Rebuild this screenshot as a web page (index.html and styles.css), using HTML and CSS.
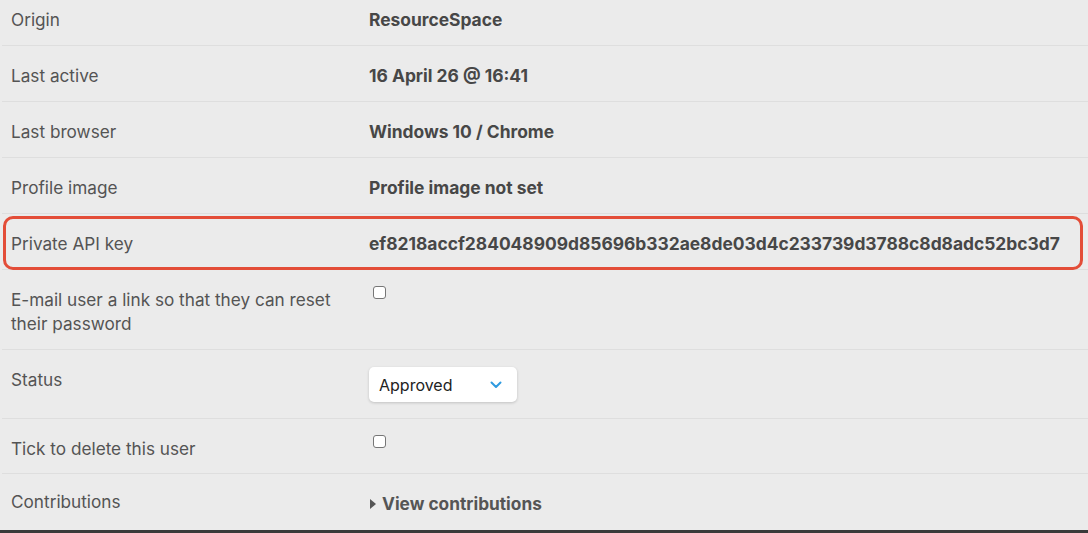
FILE: index.html
```html
<!DOCTYPE html>
<html lang="en">
<head>
<meta charset="utf-8">
<title>Edit user</title>
<link rel="stylesheet" href="styles.css">
</head>
<body>
<div class="user-details">
  <div class="row">
    <div class="label">Origin</div>
    <div class="value">ResourceSpace</div>
  </div>
  <div class="row">
    <div class="label">Last active</div>
    <div class="value">16 April 26 @ 16:41</div>
  </div>
  <div class="row">
    <div class="label">Last browser</div>
    <div class="value">Windows 10 / Chrome</div>
  </div>
  <div class="row">
    <div class="label">Profile image</div>
    <div class="value">Profile image not set</div>
  </div>
  <div class="row row--highlight">
    <div class="label">Private API key</div>
    <div class="value">ef8218accf284048909d85696b332ae8de03d4c233739d3788c8d8adc52bc3d7</div>
  </div>
  <div class="row">
    <div class="label">E-mail user a link so that they can reset their password</div>
    <div class="value value--check"><span class="checkbox"></span></div>
  </div>
  <div class="row row--select">
    <div class="label">Status</div>
    <div class="value value--select">
      <div class="select">
        <span>Approved</span>
        <svg class="chevron" width="12" height="8" viewBox="0 0 12 8"><path d="M1.5 1.5 L6 6 L10.5 1.5" fill="none" stroke="#2f9be0" stroke-width="2" stroke-linecap="round" stroke-linejoin="round"/></svg>
      </div>
    </div>
  </div>
  <div class="row row--short">
    <div class="label">Tick to delete this user</div>
    <div class="value value--check"><span class="checkbox"></span></div>
  </div>
  <div class="row row--last">
    <div class="label label--last">Contributions</div>
    <div class="value"><a class="link" href="#"><span class="caret"></span>View contributions</a></div>
  </div>
</div>
<div class="footer-bar"></div>
</body>
</html>
```

FILE: styles.css
```css
html, body {
  margin: 0;
  padding: 0;
}

body {
  background: #ebebeb;
  font-family: Inter, "Noto Sans", "Liberation Sans", sans-serif;
  font-size: 17.2px;
  line-height: 24px;
  color: #555;
  height: 533px;
  overflow: hidden;
  display: flex;
  flex-direction: column;
}

.user-details {
  margin-top: -10px;
  padding-left: 2px;
  flex: 1;
}

.row {
  position: relative;
  display: flex;
  align-items: flex-start;
  border-bottom: 1px solid #dedede;
}

.label {
  width: 367px;
  flex: none;
  box-sizing: border-box;
  padding: 18px 20px 13px 9px;
  color: #545454;
}

.value {
  padding-top: 18px;
  font-weight: 700;
  color: #474747;
  font-size: 17.4px;
}

/* red highlight frame around the API key row */
.row--highlight::after {
  content: "";
  position: absolute;
  left: 1px;
  top: 2px;
  width: 1080px;
  height: 54px;
  box-sizing: border-box;
  border: 3px solid #e34d38;
  border-radius: 10px;
  pointer-events: none;
}

.value--check {
  padding-top: 16px;
}

.checkbox {
  display: block;
  margin-left: 4px;
  width: 13px;
  height: 13px;
  box-sizing: border-box;
  border: 1px solid #767676;
  border-radius: 3px;
  background: #fff;
}

.row--select .label {
  padding-top: 18px;
  padding-bottom: 26px;
}

.value--select {
  padding-top: 17px;
}

.select {
  width: 148px;
  height: 35px;
  box-sizing: border-box;
  background: #fff;
  border-radius: 5px;
  box-shadow: 0 1px 3px rgba(0, 0, 0, 0.18);
  display: flex;
  align-items: center;
  justify-content: space-between;
  padding: 0 15px 0 10px;
  font-weight: 400;
  font-size: 16px;
  color: #222;
}

.chevron {
  display: block;
}

.row--short .label {
  padding-bottom: 12px;
}

.row--last {
  border-bottom: none;
}

.label--last {
  padding-top: 16px;
}

.link {
  color: #555;
  text-decoration: none;
  display: flex;
  align-items: center;
  font-size: 17.3px;
}

.caret {
  width: 0;
  height: 0;
  border-top: 5px solid transparent;
  border-bottom: 5px solid transparent;
  border-left: 6px solid #555;
  margin: 0 6px 0 1px;
}

.footer-bar {
  height: 3px;
  background: #3a3a3a;
}
```
